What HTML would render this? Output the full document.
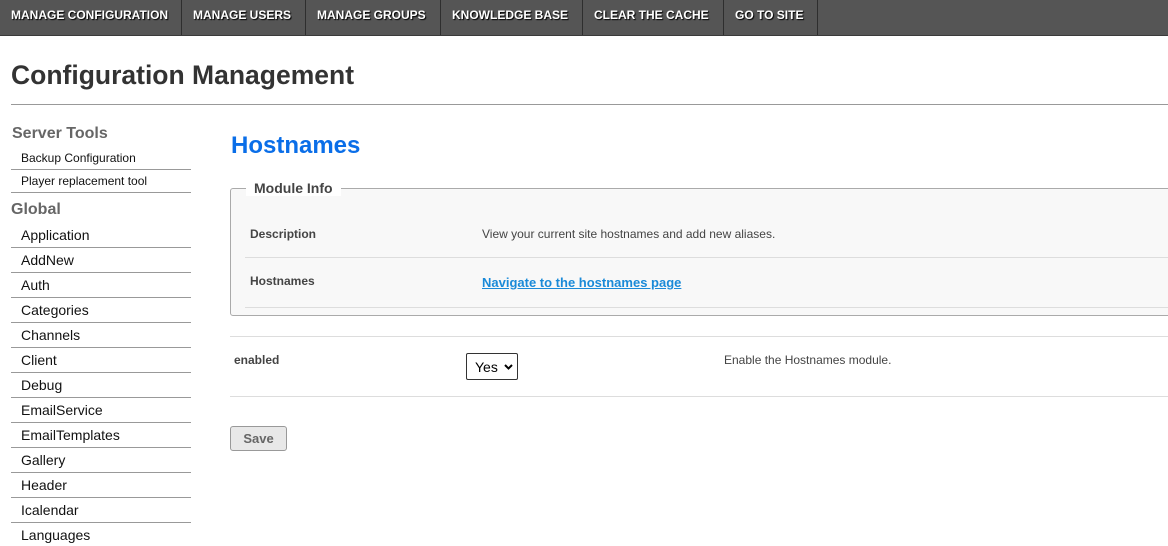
<!DOCTYPE html>
<html><head><style>
*{margin:0;padding:0;box-sizing:border-box}
body{width:1168px;height:546px;overflow:hidden;background:#fff;font-family:"Liberation Sans",Arial,sans-serif;position:relative;color:#333}
.nav{position:absolute;left:0;top:0;width:1168px;height:36px;background:#555;border-bottom:1px solid #3a3a3a}
.nav a{position:absolute;top:0;height:35px;line-height:31px;color:#fff;font-size:12px;font-weight:bold;text-shadow:1px 1px 1px #000;text-decoration:none;border-right:1px solid #2e2e2e;padding-left:11px}
.a{position:absolute;white-space:nowrap}
.hl{position:absolute;height:1px;background:#999}
.sl{position:absolute;left:11px;width:180px;height:1px;background:#999}
.si{position:absolute;left:21px;font-size:14px;color:#111}
.ss{position:absolute;left:21px;font-size:12px;color:#111}
</style></head><body>
<div class="nav">
<a style="left:0;width:182px">MANAGE CONFIGURATION</a>
<a style="left:182px;width:124px">MANAGE USERS</a>
<a style="left:306px;width:135px">MANAGE GROUPS</a>
<a style="left:441px;width:142px">KNOWLEDGE BASE</a>
<a style="left:583px;width:141px">CLEAR THE CACHE</a>
<a style="left:724px;width:94px">GO TO SITE</a>
</div>
<div class="a" style="left:11px;top:60px;font-size:26.5px;font-weight:bold;color:#333">Configuration Management</div>
<div class="hl" style="left:11px;top:104px;width:1157px"></div>
<div class="a" style="left:12px;top:125px;font-size:16px;font-weight:bold;color:#666">Server Tools</div>
<div class="ss" style="top:151px">Backup Configuration</div>
<div class="sl" style="top:169px"></div>
<div class="ss" style="top:174px">Player replacement tool</div>
<div class="sl" style="top:192px"></div>
<div class="a" style="left:11px;top:201px;font-size:16px;font-weight:bold;color:#666">Global</div>
<div class="si" style="top:227px">Application</div><div class="sl" style="top:247px"></div>
<div class="si" style="top:252px">AddNew</div><div class="sl" style="top:272px"></div>
<div class="si" style="top:277px">Auth</div><div class="sl" style="top:297px"></div>
<div class="si" style="top:302px">Categories</div><div class="sl" style="top:322px"></div>
<div class="si" style="top:327px">Channels</div><div class="sl" style="top:347px"></div>
<div class="si" style="top:352px">Client</div><div class="sl" style="top:372px"></div>
<div class="si" style="top:377px">Debug</div><div class="sl" style="top:397px"></div>
<div class="si" style="top:402px">EmailService</div><div class="sl" style="top:422px"></div>
<div class="si" style="top:427px">EmailTemplates</div><div class="sl" style="top:447px"></div>
<div class="si" style="top:452px">Gallery</div><div class="sl" style="top:472px"></div>
<div class="si" style="top:477px">Header</div><div class="sl" style="top:497px"></div>
<div class="si" style="top:502px">Icalendar</div><div class="sl" style="top:522px"></div>
<div class="si" style="top:527px">Languages</div>
<div class="a" style="left:231px;top:132px;font-size:24px;font-weight:bold;color:#0a6ee8">Hostnames</div>
<div class="a" style="left:230px;top:188px;width:950px;height:128px;background:#f8f8f8;border:1px solid #aaa;border-radius:3px"></div>
<div class="a" style="left:246px;top:180px;background:#fff;padding:0 8px;font-size:14px;font-weight:bold;color:#444">Module Info</div>
<div class="a" style="left:250px;top:227px;font-size:12px;font-weight:bold;color:#444">Description</div>
<div class="a" style="left:482px;top:227px;font-size:12px;color:#444">View your current site hostnames and add new aliases.</div>
<div class="hl" style="left:245px;top:257px;width:923px;background:#ddd"></div>
<div class="a" style="left:250px;top:274px;font-size:12px;font-weight:bold;color:#444">Hostnames</div>
<div class="a" style="left:482px;top:275px;font-size:13px;font-weight:bold;color:#1a8ad8;text-decoration:underline">Navigate to the hostnames page</div>
<div class="hl" style="left:245px;top:307px;width:923px;background:#ddd"></div>
<div class="hl" style="left:230px;top:336px;width:938px;background:#ddd"></div>
<div class="a" style="left:234px;top:353px;font-size:12px;font-weight:bold;color:#444">enabled</div>
<div class="a" style="left:466px;top:353px;width:52px;height:27px;border:1px solid #333;border-radius:2px;background:#fff;font-size:14px;color:#000;padding:5px 0 0 8px">Yes<svg style="position:absolute;left:37px;top:10px" width="9" height="6" viewBox="0 0 9 6"><path d="M1 1l3.5 3.5L8 1" stroke="#000" stroke-width="2" fill="none"/></svg></div>
<div class="a" style="left:724px;top:353px;font-size:12px;color:#444">Enable the Hostnames module.</div>
<div class="hl" style="left:230px;top:396px;width:938px;background:#ddd"></div>
<div class="a" style="left:230px;top:426px;width:57px;height:25px;border:1px solid #999;border-radius:3px;background:#e8e8e8;font-size:13px;font-weight:bold;color:#666;text-align:center;line-height:23px">Save</div>
</body></html>
